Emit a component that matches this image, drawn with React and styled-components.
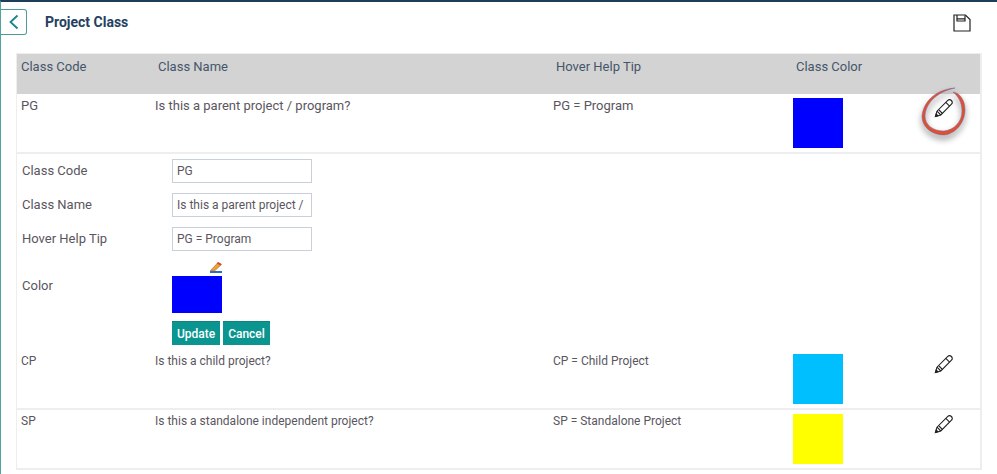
import React from 'react';
import styled, { createGlobalStyle } from 'styled-components';

const GlobalStyle = createGlobalStyle`
  html, body {
    margin: 0;
    padding: 0;
    background: #fff;
    font-family: Roboto, "Liberation Sans", sans-serif;
    overflow: hidden;
  }
`;

const Page = styled.div`
  width: 997px;
  height: 474px;
  box-sizing: border-box;
  border-top: 2px solid #1e3d59;
  border-left: 1px solid #4fa3a0;
  overflow: hidden;
`;

const TopBar = styled.div`
  display: flex;
  align-items: center;
  height: 51px;
  box-sizing: border-box;
  padding: 7px 26px 18px 0;
`;

const BackButton = styled.button`
  width: 26px;
  height: 26px;
  padding: 0;
  display: flex;
  align-items: center;
  justify-content: center;
  background: #fff;
  border: 1px solid #4d9c9b;
  border-left: none;
  border-radius: 0 3px 3px 0;
  color: #17858a;
`;

const Title = styled.h1`
  margin: 0 0 0 18px;
  flex: 1;
  font-size: 14px;
  font-weight: 700;
  line-height: 26px;
  color: #24415f;
`;

const SaveIcon = styled.svg`
  display: block;
  margin-top: 2px;
`;

const Table = styled.div`
  margin-left: 15px;
  width: 966px;
  box-sizing: border-box;
  border-left: 1px solid #eee;
  border-right: 2px solid #eee;
  border-top: 1px solid #eee;
`;

const HeaderRow = styled.div`
  display: grid;
  grid-template-columns: 137px 398px 240px 1fr;
  height: 40px;
  background: #d3d3d3;
  padding: 5px 0 0 4px;
  box-sizing: border-box;
  font-size: 13px;
  line-height: 15px;
  color: #45566b;
`;

const Row = styled.div`
  display: grid;
  grid-template-columns: 134px 398px 240px 141px 1fr;
  height: ${(props) => props.$height}px;
  padding: 4px 0 0 4px;
  box-sizing: border-box;
  border-bottom: 2px solid #eee;
  font-size: ${(props) => props.$size}px;
  line-height: 15px;
  color: #5a5660;
`;

const Swatch = styled.div`
  width: ${(props) => props.$width}px;
  height: ${(props) => props.$height}px;
  background: ${(props) => props.$color};
`;

const EditCell = styled.div`
  position: relative;
`;

const PencilIcon = styled.svg`
  display: block;
`;

const Circle = styled.svg`
  position: absolute;
  left: -16px;
  top: -14px;
  pointer-events: none;
  filter: drop-shadow(0 4px 3px rgba(0, 0, 0, 0.45));
`;

const Form = styled.div`
  display: grid;
  grid-template-columns: 150px 1fr;
  align-items: start;
  align-content: start;
  padding: 5px 0 0 5px;
  row-gap: 10px;
  height: 196px;
  box-sizing: border-box;
  font-size: 13px;
  color: #5a5660;
`;

const FormLabel = styled.label`
  line-height: 24px;
  padding-top: ${(props) => props.$top || 0}px;
`;

const Input = styled.input`
  display: block;
  width: 140px;
  height: 24px;
  box-sizing: border-box;
  border: 1px solid #c8d0da;
  padding: 0 4px;
  font: 12px Roboto, sans-serif;
  color: #5a5660;
  outline: none;
`;

const ColorPen = styled.svg`
  display: block;
  margin: 0 0 3px 38px;
`;

const Buttons = styled.div`
  display: flex;
  gap: 3px;
  margin-top: 8px;
`;

const Action = styled.button`
  height: 24px;
  width: ${(props) => props.$width}px;
  padding: 0;
  border: none;
  border-top: 1px solid #0c837f;
  background: #0a9590;
  color: #fff;
  font: 500 12px Roboto, sans-serif;
  white-space: nowrap;
`;

const Pencil = () => (
  <PencilIcon width="20" height="20" viewBox="0 0 20 20" fill="none" stroke="#222" strokeWidth="1.1">
    <path d="M1.5 18.5 L3 13.2 L13.8 2.4 C14.8 1.4 16.2 1.3 17.4 2.5 C18.6 3.7 18.5 5.2 17.5 6.2 L6.8 17 Z" />
    <path d="M3 13.2 L6.8 17 M5 12 L8.6 15.6 M11.8 4.4 L15.6 8.2" />
    <path d="M1.5 18.5 L2.2 16 L4 17.8 Z" fill="#222" />
  </PencilIcon>
);

const rows = [
  { code: 'CP', name: 'Is this a child project?', tip: 'CP = Child Project', color: '#00bfff' },
  { code: 'SP', name: 'Is this a standalone independent project?', tip: 'SP = Standalone Project', color: '#ffff00' },
];

export default function App() {
  return (
    <Page>
      <GlobalStyle />
      <TopBar>
        <BackButton>
          <svg width="12" height="16" viewBox="0 0 12 16" fill="none" stroke="#17858a" strokeWidth="1.8">
            <path d="M9.5 1.5 L2.5 8 L9.5 14.5" />
          </svg>
        </BackButton>
        <Title>Project Class</Title>
        <SaveIcon width="18" height="18" viewBox="0 0 18 18" fill="none" stroke="#222" strokeWidth="1.2">
          <path d="M1 1 H12.5 L17 5.5 V17 H1 Z" />
          <path d="M4 1 V7 H12 V1.5 M4 4.8 H12" />
        </SaveIcon>
      </TopBar>
      <Table>
        <HeaderRow>
          <div>Class Code</div>
          <div>Class Name</div>
          <div>Hover Help Tip</div>
          <div>Class Color</div>
        </HeaderRow>
        <Row $height={60} $size={13}>
          <div>PG</div>
          <div>Is this a parent project / program?</div>
          <div>PG = Program</div>
          <Swatch $width={50} $height={50} $color="#0000ff" />
          <EditCell>
            <Pencil />
            <Circle width="52" height="60" viewBox="0 0 52 60">
              <path
                d="M37 4 C22 5 6 14 4 32 C4 44 15 51 26 51 C38 50 47 38 47 26 C47 16 42 9 35 8 C40 12 44 18 44 27 C44 38 36 46 26 47 C15 47 7 41 7 32 C8 17 22 7 37 4 Z"
                fill="#df4f34"
                stroke="#6f6a9a"
                strokeWidth="0.5"
              />
            </Circle>
          </EditCell>
        </Row>
        <Form>
          <FormLabel>Class Code</FormLabel>
          <Input defaultValue="PG" />
          <FormLabel>Class Name</FormLabel>
          <Input defaultValue="Is this a parent project / program?" />
          <FormLabel>Hover Help Tip</FormLabel>
          <Input defaultValue="PG = Program" />
          <FormLabel $top={13}>Color</FormLabel>
          <div>
            <ColorPen width="12" height="12" viewBox="0 0 12 12">
              <path d="M0.5 9.5 L8 1.5 L11.5 3.5 L4.5 10 H0.5 Z" fill="#f0a030" stroke="#9a6a3a" strokeWidth="0.6" />
              <path d="M8 1 L11.5 3 L10.3 4.6 L6.8 2.6 Z" fill="#d8482c" />
              <rect x="0" y="10" width="12" height="2" fill="#2a6fc4" />
            </ColorPen>
            <Swatch $width={50} $height={37} $color="#0000ff" />
            <Buttons>
              <Action $width={48}>Update</Action>
              <Action $width={47}>Cancel</Action>
            </Buttons>
          </div>
        </Form>
        {rows.map((row) => (
          <Row key={row.code} $height={60} $size={12}>
            <div>{row.code}</div>
            <div>{row.name}</div>
            <div>{row.tip}</div>
            <Swatch $width={50} $height={50} $color={row.color} />
            <EditCell>
              <Pencil />
            </EditCell>
          </Row>
        ))}
      </Table>
    </Page>
  );
}
